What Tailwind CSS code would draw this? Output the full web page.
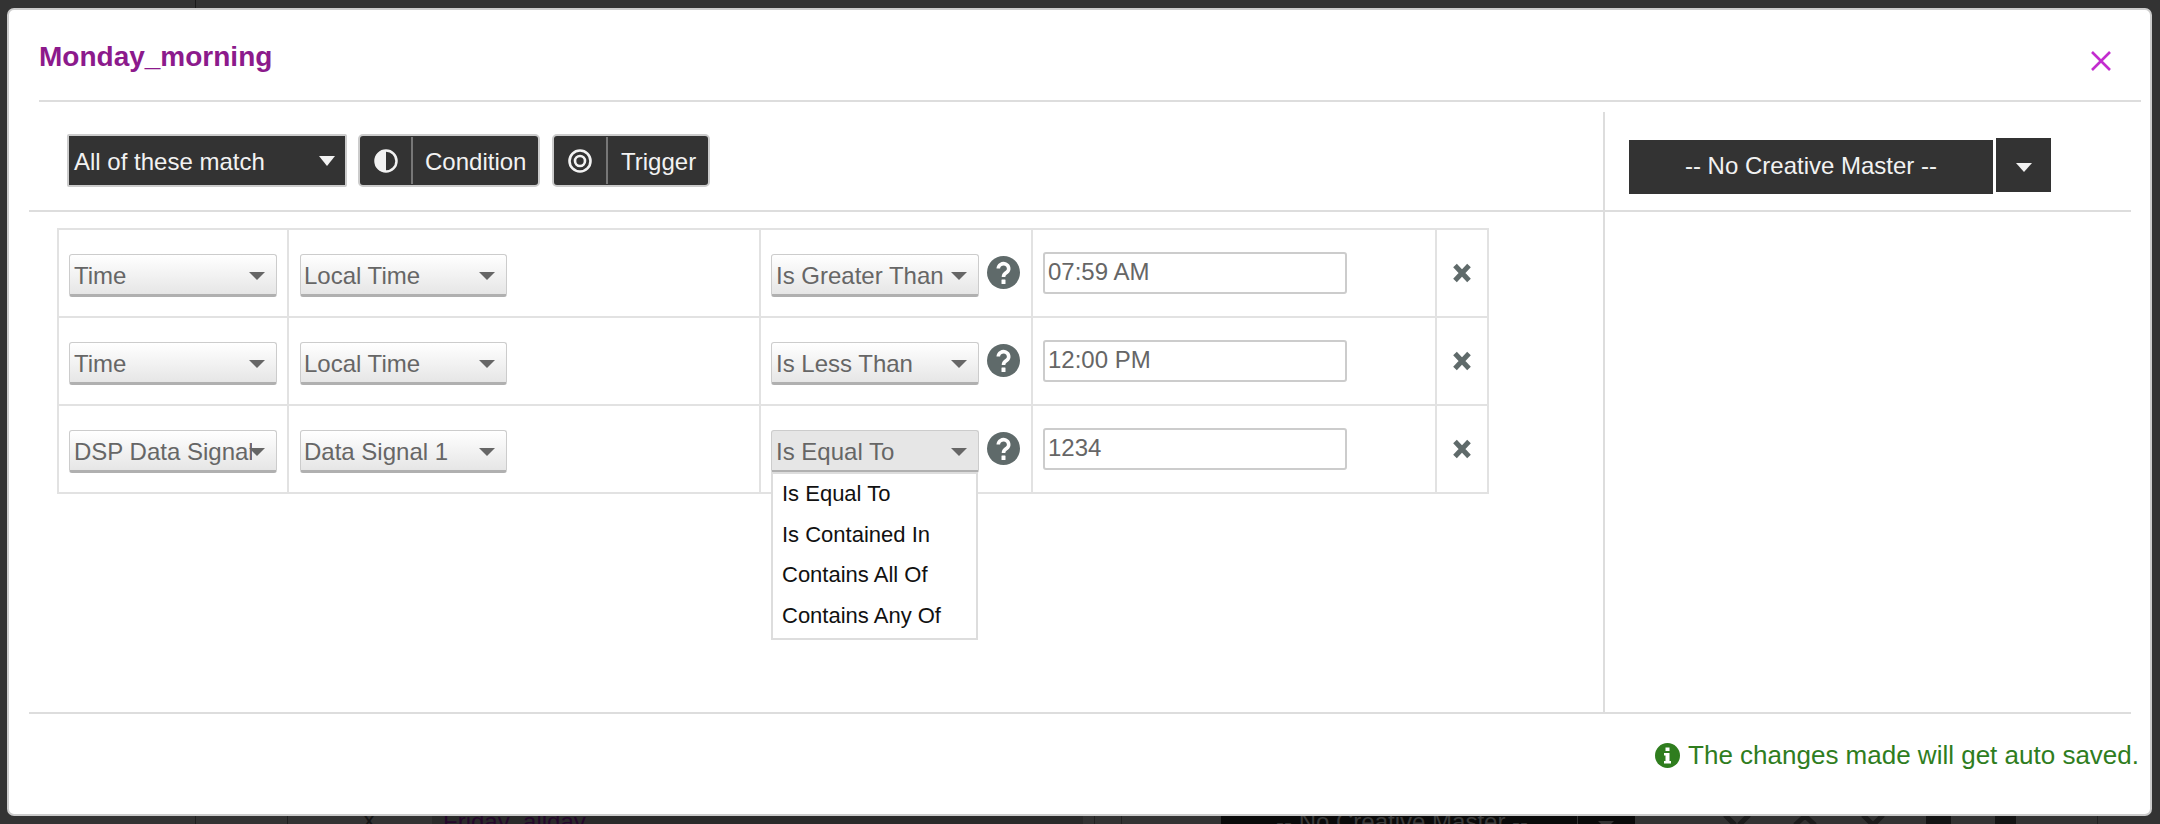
<!DOCTYPE html>
<html lang="en">

<head>
    <meta charset="UTF-8">
    <title>Monday_morning</title>
    <script src="https://cdn.jsdelivr.net/npm/@tailwindcss/browser@4"></script>
</head>

<body class="bg-[#333333] h-[824px] w-[2160px] overflow-hidden relative font-['Liberation_Sans',Arial,sans-serif]">

    <!-- page behind the modal, only its edges show -->
    <div class="absolute left-[195px] top-0 w-[1px] h-[8px] bg-[#1a1a1a]"></div>
    <div class="absolute left-0 top-[816px] w-[2160px] h-[8px] overflow-hidden bg-[#333333]">
        <div class="absolute left-[195px] top-0 w-[1px] h-[8px] bg-[#1f1f1f]"></div>
        <div class="absolute left-[287px] top-0 w-[1px] h-[8px] bg-[#1f1f1f]"></div>
        <span class="absolute left-[361px] top-[-8px] text-[24px] leading-[28px] text-[#151515]">X</span>
        <div class="absolute left-[432px] top-0 w-[651px] h-[8px] bg-[#2a2a2a]">
            <span class="absolute left-[11px] top-[-8px] text-[24px] leading-[28px] whitespace-nowrap text-[#24082a]">Friday_allday</span>
        </div>
        <div class="absolute left-[1094px] top-0 w-[1px] h-[8px] bg-[#222222]"></div>
        <div class="absolute left-[1121px] top-0 w-[1px] h-[8px] bg-[#222222]"></div>
        <div class="absolute left-[1221px] top-0 w-[414px] h-[8px] bg-[#0a0a0a]">
            <span class="absolute left-[55px] top-[-8px] text-[24px] leading-[28px] whitespace-nowrap text-[#3a3a3a]">-- No Creative Master --</span>
            <div class="absolute left-[356px] top-0 w-[1px] h-[8px] bg-[#333333]"></div>
            <span class="absolute left-[377px] top-[5px] w-0 h-0 border-x-[8px] border-x-transparent border-t-[8px] border-t-[#333333]"></span>
        </div>
        <svg class="absolute left-[1723px] top-0 w-[165px] h-[8px]" viewBox="0 0 165 8" fill="none" stroke="#1c1c1c" stroke-width="5">
            <path d="M2 -1l10 10M26 -1l-10 10M72 9l10 -9 10 9M140 -1l10 10M160 -1l-10 10"></path>
        </svg>
        <div class="absolute left-[1926px] top-0 w-[25px] h-[8px] bg-[#141414]"></div>
        <div class="absolute left-[1995px] top-0 w-[21px] h-[8px] bg-[#141414]"></div>
        <div class="absolute left-[2097px] top-0 w-[1px] h-[8px] bg-[#222222]"></div>
    </div>

    <div class="relative ml-[7px] mt-[8px] w-[2145px] h-[808px] bg-white border-2 border-[#cccccc] rounded-[7px]">

        <!-- header -->
        <div class="ml-[30px] mr-[9px] h-[92px] border-b-2 border-[#dddddd] flex items-start justify-between">
            <h1 class="mt-[29px] text-[28px] leading-[36px] font-bold text-[#8c1a8c]">Monday_morning</h1>
            <svg class="mt-[41px] mr-[30px] w-[20px] h-[20px]" viewBox="0 0 20 20" fill="none" stroke="#c32ccf" stroke-width="2.6">
                <path d="M1 1l18 18M19 1L1 19"></path>
            </svg>
        </div>

        <div class="flex ml-[20px] mr-[19px] mt-[10px] h-[602px] border-b-2 border-[#dddddd]">

            <!-- conditions -->
            <div class="w-[1576px] border-r-2 border-[#dddddd]">
                <div class="h-[100px] border-b-2 border-[#dddddd] pl-[38px] pt-[22px] flex gap-[11px] text-[24px] text-[#f2f2f2]">
                    <div class="w-[280px] h-[53px] bg-[#333333] border-2 border-[#cccccc] rounded-[2px] pl-[5px] flex items-center justify-between pr-[10px]">
                        <span class="mt-[2px]">All of these match</span>
                        <span class="w-0 h-0 border-x-[8px] border-x-transparent border-t-[10px] border-t-[#f2f2f2]"></span>
                    </div>
                    <div class="w-[182px] h-[53px] bg-[#333333] border-2 border-[#cccccc] rounded-[5px] flex items-center">
                        <div class="w-[53px] h-[47px] border-r-2 border-[#777777] flex items-center justify-center">
                            <svg class="w-[24px] h-[24px]" viewBox="0 0 24 24">
                                <circle cx="12" cy="12" r="10.5" fill="none" stroke="#f2f2f2" stroke-width="2.5"></circle>
                                <path d="M12 1a11 11 0 0 0 0 22z" fill="#f2f2f2"></path>
                            </svg>
                        </div>
                        <span class="ml-[12px] mt-[2px]">Condition</span>
                    </div>
                    <div class="ml-[1px] w-[158px] h-[53px] bg-[#333333] border-2 border-[#cccccc] rounded-[5px] flex items-center">
                        <div class="w-[54px] h-[47px] border-r-2 border-[#777777] flex items-center justify-center">
                            <svg class="w-[24px] h-[24px]" viewBox="0 0 24 24" fill="none" stroke="#f2f2f2">
                                <circle cx="12" cy="12" r="10.5" stroke-width="2.6"></circle>
                                <circle cx="12" cy="12" r="5" stroke-width="2.6"></circle>
                            </svg>
                        </div>
                        <span class="ml-[13px] mt-[2px]">Trigger</span>
                    </div>
                </div>

                <div class="ml-[28px] mt-[16px] w-[1432px] border-2 border-[#e2e2e2] text-[24px] text-[#666666]">
                    <!-- row 1 -->
                    <div class="flex h-[88px] border-b-2 border-[#e2e2e2]">
                        <div class="w-[230px] border-r-2 border-[#e2e2e2] pl-[10px] pt-[24px]">
                            <div class="relative w-[208px] h-[43px] pl-[4px] pr-[30px] bg-gradient-to-b from-white to-[#e6e6e6] border border-[#cccccc] border-b-[3px] border-b-[#b0b0b0] rounded-[3px] leading-[42px] whitespace-nowrap overflow-hidden">
                                Time
                                <span class="absolute right-[11px] top-[17px] w-0 h-0 border-x-[8px] border-x-transparent border-t-[8px] border-t-[#666666]"></span>
                            </div>
                        </div>
                        <div class="w-[472px] border-r-2 border-[#e2e2e2] pl-[11px] pt-[24px]">
                            <div class="relative w-[207px] h-[43px] pl-[3px] pr-[30px] bg-gradient-to-b from-white to-[#e6e6e6] border border-[#cccccc] border-b-[3px] border-b-[#b0b0b0] rounded-[3px] leading-[42px] whitespace-nowrap overflow-hidden">
                                Local Time
                                <span class="absolute right-[11px] top-[17px] w-0 h-0 border-x-[8px] border-x-transparent border-t-[8px] border-t-[#666666]"></span>
                            </div>
                        </div>
                        <div class="w-[272px] border-r-2 border-[#e2e2e2] pl-[10px] pt-[24px] flex items-start gap-[8px]">
                            <div class="relative w-[208px] h-[43px] pl-[4px] bg-gradient-to-b from-white to-[#e6e6e6] border border-[#cccccc] border-b-[3px] border-b-[#b0b0b0] rounded-[3px] leading-[42px] whitespace-nowrap overflow-hidden">
                                Is Greater Than
                                <span class="absolute right-[11px] top-[17px] w-0 h-0 border-x-[8px] border-x-transparent border-t-[8px] border-t-[#666666]"></span>
                            </div>
                            <svg class="mt-[2px] w-[33px] h-[33px] shrink-0" viewBox="0 0 33 33">
                                <circle cx="16.500" cy="16.500" r="16.500" fill="#5f6a6a"></circle>
                                <path d="M11.300 12.500a5.200 4.800 0 1 1 8.500 3.700c-2 1.500-3.300 2-3.300 4.800" fill="none" stroke="#fff" stroke-width="3.600"></path>
                                <rect x="14.500" y="23.500" width="4" height="4.500" rx="0.500" fill="#fff"></rect>
                            </svg>
                        </div>
                        <div class="w-[404px] border-r-2 border-[#e2e2e2] pl-[10px] pt-[22px]">
                            <div class="w-[304px] h-[42px] px-[3px] border-2 border-[#cccccc] rounded-[3px] leading-[36px]">07:59 AM</div>
                        </div>
                        <div class="flex-1 flex items-start justify-center pt-[33px]">
                            <svg class="w-[20px] h-[20px]" viewBox="0 0 20 20" stroke="#5f6a6a" stroke-width="5" fill="none">
                                <path d="M3 2.500l14 15M17 2.500l-14 15"></path>
                            </svg>
                        </div>
                    </div>
                    <!-- row 2 -->
                    <div class="flex h-[88px] border-b-2 border-[#e2e2e2]">
                        <div class="w-[230px] border-r-2 border-[#e2e2e2] pl-[10px] pt-[24px]">
                            <div class="relative w-[208px] h-[43px] pl-[4px] pr-[30px] bg-gradient-to-b from-white to-[#e6e6e6] border border-[#cccccc] border-b-[3px] border-b-[#b0b0b0] rounded-[3px] leading-[42px] whitespace-nowrap overflow-hidden">
                                Time
                                <span class="absolute right-[11px] top-[17px] w-0 h-0 border-x-[8px] border-x-transparent border-t-[8px] border-t-[#666666]"></span>
                            </div>
                        </div>
                        <div class="w-[472px] border-r-2 border-[#e2e2e2] pl-[11px] pt-[24px]">
                            <div class="relative w-[207px] h-[43px] pl-[3px] pr-[30px] bg-gradient-to-b from-white to-[#e6e6e6] border border-[#cccccc] border-b-[3px] border-b-[#b0b0b0] rounded-[3px] leading-[42px] whitespace-nowrap overflow-hidden">
                                Local Time
                                <span class="absolute right-[11px] top-[17px] w-0 h-0 border-x-[8px] border-x-transparent border-t-[8px] border-t-[#666666]"></span>
                            </div>
                        </div>
                        <div class="w-[272px] border-r-2 border-[#e2e2e2] pl-[10px] pt-[24px] flex items-start gap-[8px]">
                            <div class="relative w-[208px] h-[43px] pl-[4px] bg-gradient-to-b from-white to-[#e6e6e6] border border-[#cccccc] border-b-[3px] border-b-[#b0b0b0] rounded-[3px] leading-[42px] whitespace-nowrap overflow-hidden">
                                Is Less Than
                                <span class="absolute right-[11px] top-[17px] w-0 h-0 border-x-[8px] border-x-transparent border-t-[8px] border-t-[#666666]"></span>
                            </div>
                            <svg class="mt-[2px] w-[33px] h-[33px] shrink-0" viewBox="0 0 33 33">
                                <circle cx="16.500" cy="16.500" r="16.500" fill="#5f6a6a"></circle>
                                <path d="M11.300 12.500a5.200 4.800 0 1 1 8.500 3.700c-2 1.500-3.300 2-3.300 4.800" fill="none" stroke="#fff" stroke-width="3.600"></path>
                                <rect x="14.500" y="23.500" width="4" height="4.500" rx="0.500" fill="#fff"></rect>
                            </svg>
                        </div>
                        <div class="w-[404px] border-r-2 border-[#e2e2e2] pl-[10px] pt-[22px]">
                            <div class="w-[304px] h-[42px] px-[3px] border-2 border-[#cccccc] rounded-[3px] leading-[36px]">12:00 PM</div>
                        </div>
                        <div class="flex-1 flex items-start justify-center pt-[33px]">
                            <svg class="w-[20px] h-[20px]" viewBox="0 0 20 20" stroke="#5f6a6a" stroke-width="5" fill="none">
                                <path d="M3 2.500l14 15M17 2.500l-14 15"></path>
                            </svg>
                        </div>
                    </div>
                    <!-- row 3 -->
                    <div class="flex h-[86px]">
                        <div class="w-[230px] border-r-2 border-[#e2e2e2] pl-[10px] pt-[24px]">
                            <div class="relative w-[208px] h-[43px] pl-[4px] bg-gradient-to-b from-white to-[#e6e6e6] border border-[#cccccc] border-b-[3px] border-b-[#b0b0b0] rounded-[3px] leading-[42px] whitespace-nowrap overflow-hidden">
                                <span class="block w-[178px] overflow-hidden">DSP Data Signal 1</span>
                                <span class="absolute right-[11px] top-[17px] w-0 h-0 border-x-[8px] border-x-transparent border-t-[8px] border-t-[#666666]"></span>
                            </div>
                        </div>
                        <div class="w-[472px] border-r-2 border-[#e2e2e2] pl-[11px] pt-[24px]">
                            <div class="relative w-[207px] h-[43px] pl-[3px] pr-[30px] bg-gradient-to-b from-white to-[#e6e6e6] border border-[#cccccc] border-b-[3px] border-b-[#b0b0b0] rounded-[3px] leading-[42px] whitespace-nowrap overflow-hidden">
                                Data Signal 1
                                <span class="absolute right-[11px] top-[17px] w-0 h-0 border-x-[8px] border-x-transparent border-t-[8px] border-t-[#666666]"></span>
                            </div>
                        </div>
                        <div class="w-[272px] border-r-2 border-[#e2e2e2] pl-[10px] pt-[24px] flex items-start gap-[8px]">
                            <div class="relative w-[208px] shrink-0">
                                <div class="relative h-[43px] pl-[4px] pr-[30px] bg-[#e6e6e6] border border-[#cccccc] border-b-[3px] border-b-[#b0b0b0] rounded-[3px] leading-[42px] whitespace-nowrap overflow-hidden">
                                    Is Equal To
                                    <span class="absolute right-[11px] top-[17px] w-0 h-0 border-x-[8px] border-x-transparent border-t-[8px] border-t-[#666666]"></span>
                                </div>
                                <!-- open dropdown -->
                                <ul class="absolute left-0 top-[42px] w-[207px] h-[168px] z-10 bg-white border-2 border-[#dddddd] pl-[9px] text-[22px] leading-[40.6px] text-[#111111] whitespace-nowrap">
                                    <li>Is Equal To</li>
                                    <li>Is Contained In</li>
                                    <li>Contains All Of</li>
                                    <li>Contains Any Of</li>
                                </ul>
                            </div>
                            <svg class="mt-[2px] w-[33px] h-[33px] shrink-0" viewBox="0 0 33 33">
                                <circle cx="16.500" cy="16.500" r="16.500" fill="#5f6a6a"></circle>
                                <path d="M11.300 12.500a5.200 4.800 0 1 1 8.500 3.700c-2 1.500-3.300 2-3.300 4.800" fill="none" stroke="#fff" stroke-width="3.600"></path>
                                <rect x="14.500" y="23.500" width="4" height="4.500" rx="0.500" fill="#fff"></rect>
                            </svg>
                        </div>
                        <div class="w-[404px] border-r-2 border-[#e2e2e2] pl-[10px] pt-[22px]">
                            <div class="w-[304px] h-[42px] px-[3px] border-2 border-[#cccccc] rounded-[3px] leading-[36px]">1234</div>
                        </div>
                        <div class="flex-1 flex items-start justify-center pt-[33px]">
                            <svg class="w-[20px] h-[20px]" viewBox="0 0 20 20" stroke="#5f6a6a" stroke-width="5" fill="none">
                                <path d="M3 2.500l14 15M17 2.500l-14 15"></path>
                            </svg>
                        </div>
                    </div>
                </div>
            </div>

            <!-- creative master -->
            <div class="flex-1">
                <div class="h-[100px] border-b-2 border-[#dddddd] pl-[24px] flex items-start text-[24px] text-[#f2f2f2]">
                    <div class="mt-[28px] w-[364px] h-[54px] pb-[2px] bg-[#333333] flex items-center justify-center">-- No Creative Master --</div>
                    <div class="mt-[26px] ml-[3px] w-[55px] h-[54px] bg-[#333333] flex items-center justify-center">
                        <span class="mt-[4px] w-0 h-0 border-x-[8px] border-x-transparent border-t-[9px] border-t-[#f2f2f2]"></span>
                    </div>
                </div>
            </div>
        </div>

        <!-- footer -->
        <div class="mt-[27px] mr-[11px] flex items-center justify-end gap-[8px] text-[26px] leading-[28px] text-[#2f7d1e]">
            <svg class="w-[25px] h-[25px]" viewBox="0 0 25 25">
                <circle cx="12.500" cy="12.500" r="12.500" fill="#2f7d1e"></circle>
                <rect x="10.500" y="4.500" width="4" height="3.500" fill="#fff"></rect>
                <path d="M9 10h5.500v8H16v2.500H9V18h1.500v-5.500H9z" fill="#fff"></path>
            </svg>
            <span>The changes made will get auto saved.</span>
        </div>
    </div>
</body>

</html>
